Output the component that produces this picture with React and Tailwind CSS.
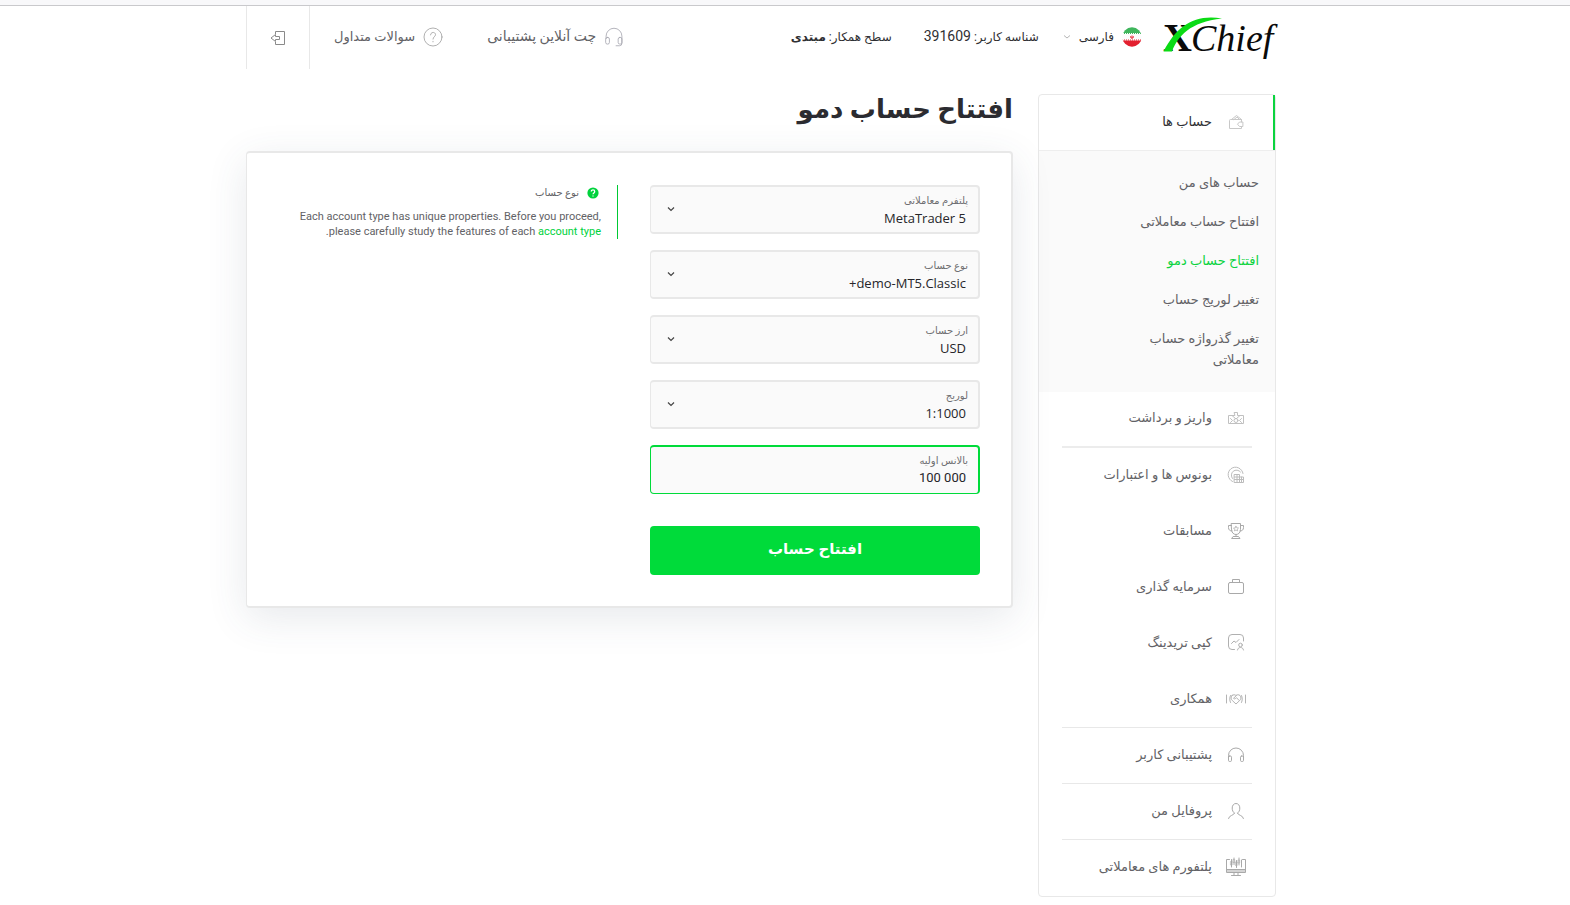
import React, { useState } from "react";

const SUBMENU = [
  { label: "حساب های من" },
  { label: "افتتاح حساب معاملاتی" },
  { label: "افتتاح حساب دمو", active: true },
  { label: "تغییر لوریج حساب" },
  { label: "تغییر گذرواژه حساب معاملاتی" },
];

const Icon = ({ children, className = "h-6 w-6" }) => (
  <svg
    viewBox="0 0 24 24"
    className={`shrink-0 ${className}`}
    fill="none"
    stroke="currentColor"
    strokeWidth="1"
    strokeLinecap="round"
    strokeLinejoin="round"
    aria-hidden="true"
  >
    {children}
  </svg>
);

const WalletIcon = () => (
  <Icon className="h-6 w-6 text-[#c8c8c8]">
    <path d="M17.500 12V9.500H6.500a1 1 0 0 0-1 1V18.500H17.500V16.500" />
    <path d="M18.500 12H15.500L13.500 14.200 15.500 16.500H18.500z" />
    <path d="M7.500 9.500L12.500 5.500 17.500 9.500M10 9.500L13 7l2.500 2.500" />
  </Icon>
);

const DepositIcon = () => (
  <Icon className="h-6 w-6 text-[#c0c0c0]">
    <path d="M8.500 9.500H4.500V17.500H19.500V9.500H15.500" />
    <path d="M10.500 6.500h3V9.500h2.500L12 13 8 9.500h2.500z" />
    <circle cx="12" cy="14.500" r="2" />
    <path d="M6.500 12.500l2 2-2 2M17.500 12.500l-2 2 2 2" />
  </Icon>
);

const BonusIcon = () => (
  <Icon className="h-6 w-6 text-[#bcbcbc]">
    <path d="M8.500 18.500A7.500 7.500 0 1 1 19 10.500" />
    <path d="M8.500 15.500A5 5 0 1 1 16.500 9" />
    <path d="M10.500 11.500h5v8h-5zM10.500 14h5M10.500 16.500h9M15.500 14h4v5.500h-4M13 11.500v8M17.500 14v5.500" />
  </Icon>
);

const TrophyIcon = () => (
  <Icon className="h-6 w-6 text-[#a9a9a9]">
    <path d="M7.500 4.500h9v6c0 3-2 5-4.500 5s-4.500-2-4.500-5z" />
    <path d="M7.500 6.500H4.500v2c0 2.500 1.500 3.500 3.500 3.500M16.500 6.500h3v2c0 2.500-1.500 3.500-3.500 3.500M12 15.500v2M9.500 17.500h5l1.500 2H8z" />
    <path d="M12 7.300l.8 1.500 1.700.2-1.200 1.200.3 1.700-1.600-.8-1.600.8.300-1.700L9.500 9l1.700-.2z" strokeWidth=".7" />
  </Icon>
);

const BriefcaseIcon = () => (
  <Icon className="h-6 w-6 text-[#a9a9a9]">
    <path d="M6 7.500h12a1.500 1.500 0 0 1 1.500 1.500v8a1.500 1.500 0 0 1-1.500 1.500H6A1.500 1.500 0 0 1 4.500 17V9A1.500 1.500 0 0 1 6 7.500z" />
    <path d="M8.500 7.500v-3h7v3" />
  </Icon>
);

const CopyIcon = () => (
  <Icon className="h-6 w-6 text-[#b0b0b0]">
    <path d="M10.500 18.500H8A3.500 3.500 0 0 1 4.500 15V7A3.500 3.500 0 0 1 8 3.500h8A3.500 3.500 0 0 1 19.500 7v3" />
    <path d="M7.500 12.500l2.500-2.500 2 1.500 3-3" />
    <circle cx="16.500" cy="14" r="1.800" />
    <path d="M13.500 19c.3-1.500 1.300-2.500 3-2.500s2.700 1 3 2.500" />
  </Icon>
);

const HandshakeIcon = () => (
  <Icon className="h-6 w-6 text-[#b4b4b4]">
    <path d="M2.500 8v8M21.500 8v8M6.500 8.500c-1 2-1 5 0 7M17.500 8.500c1 2 1 5 0 7" />
    <path d="M8 8.500c1.500-1.200 3-.8 4 0 1-.8 2.500-1.200 4 0 1.500 1.800 1 3.700-.3 5L12 17l-3.700-3.500C7 12.200 6.500 10.300 8 8.500z" />
    <path d="M12.500 8.500l-3 2.800c.8 1 1.800.6 3-.6l2.500 2.600" />
  </Icon>
);

const HeadphonesIcon = () => (
  <Icon className="h-6 w-6 text-[#a9a9a9]">
    <path d="M4.500 15v-2.500a7.500 7.500 0 0 1 15 0V15" />
    <rect x="4.500" y="13" width="3" height="5.500" rx="1.200" />
    <rect x="16.500" y="13" width="3" height="5.500" rx="1.200" />
  </Icon>
);

const UserIcon = () => (
  <Icon className="h-6 w-6 text-[#a9a9a9]">
    <path d="M10.500 14.200C9 13.200 8.200 11.500 8.200 9c0-2.500 1.500-4.500 3.800-4.500S15.800 6.500 15.800 9c0 2.500-.8 4.200-2.300 5.200" />
    <path d="M10.500 14.200c-.2 2.300-5.500 1.800-6 5.300M13.500 14.200c.2 2.300 5.500 1.800 6 5.300" />
  </Icon>
);

const MonitorIcon = () => (
  <Icon className="h-6 w-6 text-[#a9a9a9]">
    <path d="M5.500 4.500h-3v13h19v-13h-3M2.500 14.500h19M2.500 16h19M10 17.500v2.500M14 17.500v2.500M7.500 20.500h9" />
    <path d="M7.500 4.500v7.500M10 3v6.500M12.500 5.500v7M15 3v7M17.500 5v7" />
    <path d="M6.800 6.500h1.400v3.500H6.800zM9.300 4.500h1.400v3H9.300zM11.800 7h1.400v3.500h-1.400zM14.300 5h1.400v3h-1.400z" strokeWidth=".6" />
  </Icon>
);

const MENU = [
  { label: "واریز و برداشت", icon: DepositIcon, line: "border-b-2 border-[#ececec]" },
  { label: "بونوس ها و اعتبارات", icon: BonusIcon },
  { label: "مسابقات", icon: TrophyIcon },
  { label: "سرمایه گذاری", icon: BriefcaseIcon },
  { label: "کپی تریدینگ", icon: CopyIcon },
  { label: "همکاری", icon: HandshakeIcon, line: "border-b border-[#e8e8e8]" },
  { label: "پشتیبانی کاربر", icon: HeadphonesIcon, line: "border-b border-[#e8e8e8]" },
  { label: "پروفایل من", icon: UserIcon, line: "border-b border-[#e8e8e8]" },
  { label: "پلتفورم های معاملاتی", icon: MonitorIcon },
];

const Logo = () => (
  <svg viewBox="0 0 114 44" className="h-11 w-[114px] overflow-visible" role="img" aria-label="xChief" direction="ltr">
    <g fontFamily="'Liberation Serif', serif" fill="#0a0a0a">
      <text x="1" y="36" fontSize="40" fontWeight="700">X</text>
      <text x="29" y="36" fontSize="38" fontStyle="italic">Chief</text>
    </g>
    <path d="M1.500 36.500H10C16 21 28 7 60 3.500C32-1 15 11 1.500 36.500z" fill="#0bdb14" />
  </svg>
);

const Flag = () => (
  <svg viewBox="0 0 20 20" className="h-5 w-5" aria-hidden="true">
    <clipPath id="flag-round">
      <circle cx="10" cy="10" r="9.700" />
    </clipPath>
    <g clipPath="url(#flag-round)">
      <path d="M0 0h20v20H0z" fill="#fcfcfc" />
      <path d="M0 0h20v6H0z" fill="#3fb65c" />
      <path d="M0 13.500h20v6.500H0z" fill="#e3202f" />
      <path d="M0 6.500h20" stroke="#3fb65c" strokeDasharray="1 1" />
      <path d="M0 13h20" stroke="#e3202f" strokeDasharray="1 1" />
      <path d="M10 8.500v3M8.700 9.200c-.4.900.1 1.900 1.300 2.100 1.200-.2 1.700-1.200 1.300-2.100" stroke="#e3202f" fill="none" />
    </g>
  </svg>
);

const Header = () => (
  <header className="flex h-[63px] items-center justify-between text-[12px] text-[#2f2f33]">
    <div className="flex items-center pb-[2px]">
      <a href="#home">
        <Logo />
      </a>
      <button className="mr-5 flex items-center gap-2">
        <Flag />
        <span>فارسی</span>
        <svg viewBox="0 0 8 6" className="h-[6px] w-2 text-[#b5b5b5]" fill="none" stroke="currentColor" aria-hidden="true">
          <path d="M1 1.500l3 2.500 3-2.500" />
        </svg>
      </button>
      <span className="mr-6">شناسه کاربر: <span className="text-[14px]">391609</span></span>
      <span className="mr-8">
        سطح همکار: <b className="font-semibold">مبتدی</b>
      </span>
    </div>
    <div className="flex items-center self-stretch text-[13px] text-[#626266]">
      <a href="#chat" className="flex items-center gap-2 pb-[2px] text-[14px]">
        <Icon className="h-5 w-5 text-[#a6a6b0]">
          <path d="M2.500 14v-3a9.500 9.500 0 0 1 19 0v8.500a3 3 0 0 1-3 3h-4" />
          <rect x="2" y="12.500" width="4.500" height="8" rx="2" />
          <rect x="17" y="12.500" width="4.500" height="8" rx="2" />
        </Icon>
        <span>چت آنلاین پشتیبانی</span>
      </a>
      <a href="#faq" className="mr-11 flex items-center gap-2 pb-[2px]">
        <Icon className="h-5 w-5 text-[#a0a0a0]">
          <circle cx="12" cy="12" r="10.800" />
          <path d="M9 9.500c0-4 6-4 6-.3 0 2.300-3 2.600-3 5.300M12 17.200v.6" />
        </Icon>
        <span>سوالات متداول</span>
      </a>
      <button aria-label="خروج" className="mr-6 flex w-16 items-center justify-center self-stretch border-x border-[#e8e8e8]">
        <svg viewBox="0 0 16 16" className="h-4 w-4 text-[#8a8a8a]" fill="none" stroke="currentColor" aria-hidden="true">
          <path d="M5.500 4V1.500H14.500V14.500H5.500V12" />
          <path d="M5.500 4.500v2h4v3h-4v2L1 8z" />
        </svg>
      </button>
    </div>
  </header>
);

const Sidebar = () => (
  <aside className="w-[238px] shrink-0 rounded border border-[#e8e8e8] text-[13px] text-[#626266]">
    <a href="#accounts" className="flex h-[55px] items-center gap-3 border-r-2 border-[#0bd33f] pr-[25px] pb-[2px] text-[#2f2f33]">
      <WalletIcon />
      <span>حساب ها</span>
    </a>
    <ul className="space-y-[18px] border-t border-[#eeeeee] bg-[#fafafa] pt-[21px] pr-4 pb-[22px] pl-20 leading-[21px]">
      {SUBMENU.map((item) => (
        <li key={item.label}>
          <a href="#accounts" className={item.active ? "text-[#0bd33f]" : ""}>
            {item.label}
          </a>
        </li>
      ))}
    </ul>
    <nav className="px-[23px]">
      {MENU.map((item) => (
        <a key={item.label} href="#menu" className={`flex h-14 items-center gap-3 pr-1 pb-[2px] ${item.line || ""}`}>
          <item.icon />
          <span>{item.label}</span>
        </a>
      ))}
    </nav>
  </aside>
);

const SelectField = ({ id, label, value }) => (
  <div className="relative h-[49px] rounded border-2 border-l border-[#e8e8e8] bg-[#fafafa]">
    <label htmlFor={id} className="absolute top-[6px] right-[10px] text-[10px] leading-4 text-[#6d6d70]">
      {label}
    </label>
    <select
      id={id}
      className="h-full w-full appearance-none bg-transparent pt-5 pr-3 pb-1 pl-8 font-['Open_Sans',sans-serif] text-[13px] leading-5 text-[#26262a] outline-none"
    >
      <option>{value}</option>
    </select>
    <svg
      viewBox="0 0 8 6"
      className="pointer-events-none absolute top-[19px] left-4 h-[6px] w-2 text-[#444]"
      fill="none"
      stroke="currentColor"
      strokeWidth="1.200"
      aria-hidden="true"
    >
      <path d="M1 1.500l3 3 3-3" />
    </svg>
  </div>
);

const OpenDemoForm = () => {
  const [balance, setBalance] = useState("100 000");

  return (
    <form className="flex w-[330px] shrink-0 flex-col gap-4" onSubmit={(e) => e.preventDefault()}>
      <SelectField id="platform" label="پلتفرم معاملاتی" value="MetaTrader 5" />
      <SelectField id="type" label="نوع حساب" value="demo-MT5.Classic+" />
      <SelectField id="currency" label="ارز حساب" value="USD" />
      <SelectField id="leverage" label="لوریج" value="1:1000" />
      <div className="relative h-[49px] rounded border-2 border-b border-l border-[#00db3a] bg-[#fafafa]">
        <label htmlFor="balance" className="absolute top-[6px] right-[10px] text-[10px] leading-4 text-[#6d6d70]">
          بالانس اولیه
        </label>
        <input
          id="balance"
          dir="ltr"
          value={balance}
          onChange={(e) => setBalance(e.target.value)}
          className="h-full w-full bg-transparent px-3 pt-[18px] pb-1 text-right text-[13px] leading-5 text-[#26262a] outline-none"
        />
      </div>
      <button className="mt-4 h-[49px] rounded bg-[#00db3a] pb-[2px] text-[15px] font-bold text-white">افتتاح حساب</button>
    </form>
  );
};

const App = () => (
  <div dir="rtl" className="min-h-screen bg-white font-['Roboto','DejaVu_Sans',sans-serif]">
    <div className="h-[6px] border-b border-[#c9c9cc] bg-[#f8f8fa]" />
    <div className="pr-12">
      <div className="mx-auto max-w-[1030px]">
        <Header />
        <div className="mt-[25px] flex items-start gap-[25px] pb-2">
          <Sidebar />
          <main className="min-w-0 flex-1">
            <h1 className="text-[26px] leading-[30px] font-bold text-[#2b2b30]">افتتاح حساب دمو</h1>
            <section className="mt-[27px] flex items-start rounded border-2 border-l border-[#e8e8e8] bg-white px-[31px] pt-8 pb-[31px] shadow-[0_10px_40px_rgba(60,75,95,0.12)]">
              <OpenDemoForm />
              <aside className="mr-8 flex-1 border-r border-[#00c934] pr-4 text-[#626266]">
                <div className="flex items-center gap-2 text-[10px] leading-4">
                  <svg viewBox="0 0 12 12" className="mr-[2px] h-3 w-3" aria-hidden="true">
                    <circle cx="6" cy="6" r="5.600" fill="#00d23c" />
                    <path d="M4.300 4.600c0-2.300 3.400-2.200 3.400-.1C7.700 5.900 6 5.900 6 7.300M6 8.400v1.200" stroke="#fff" strokeWidth="1.300" fill="none" />
                  </svg>
                  <span>نوع حساب</span>
                </div>
                <p className="mt-2 text-[11px] leading-[15px]">
                  Each account type has unique properties. Before you proceed, please carefully study the features of
                  each{" "}
                  <a href="#types" className="text-[#00d23c]">
                    account type
                  </a>
                  .
                </p>
              </aside>
            </section>
          </main>
        </div>
      </div>
    </div>
  </div>
);

export default App;
